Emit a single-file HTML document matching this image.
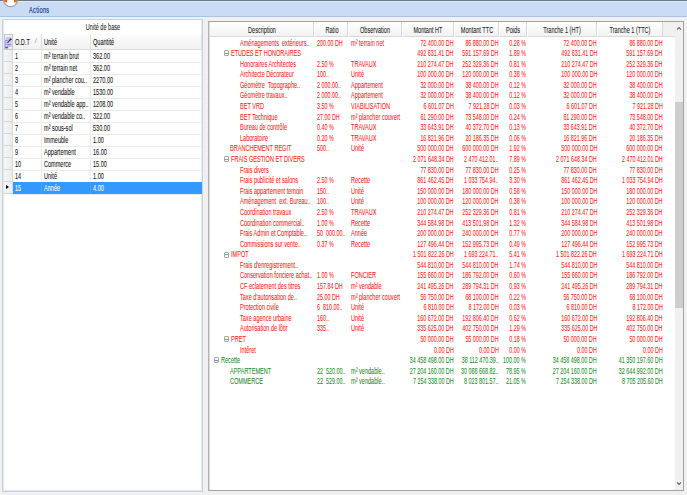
<!DOCTYPE html>
<html><head><meta charset="utf-8"><title>Unité de base</title>
<style>
html,body{margin:0;padding:0}
body{width:687px;height:495px;overflow:hidden;position:relative;background:#f0f0f0;font-family:"Liberation Sans",sans-serif}
.b{position:absolute}
.t{position:absolute;z-index:3;white-space:pre;-webkit-text-stroke:0.07px currentColor;line-height:10px;font-size:8.7px}
.c{text-align:center}
</style></head><body>
<div class="b" style="left:0px;top:0px;width:687px;height:1px;background:#6d7b89"></div>
<div class="b" style="left:0px;top:1px;width:687px;height:15px;background:#c9dcf4"></div>
<div class="b" style="left:0px;top:1px;width:687px;height:1px;background:#d9e7f8"></div>
<div class="b" style="left:0px;top:16px;width:687px;height:1px;background:#a9c3e6"></div>
<svg class="b" style="left:0;top:0" width="24" height="10" viewBox="0 0 24 10"><circle cx="10.6" cy="-0.4" r="7.0" fill="#fff" stroke="#9aa0a8" stroke-width="1.1"/><path d="M3.6 -1 L7.5 -1 L7.1 2.6 L4.8 2.2 Z" fill="#e8640c"/><path d="M13.7 -1 L17.6 -1 L16.4 2.2 L14.1 2.6 Z" fill="#e8640c"/></svg>
<div class="t" style="left:28.80px;top:4.70px;color:#15398a;transform:scaleX(0.64);transform-origin:0 0;font-size:8.7px;letter-spacing:0.5px;-webkit-text-stroke:0.2px #15398a">Actions</div>
<div class="b" style="left:2px;top:19px;width:201px;height:473px;background:#fff;border:1px solid #c3d3e3;box-sizing:border-box;box-shadow:inset 1px -1px 0 #e0e9f2, inset -1px 0 0 #e0e9f2"></div>
<div class="t c" style="left:-97.00px;width:400px;top:22.00px;color:#222;transform:scaleX(0.64);transform-origin:50% 0;font-size:8.7px;">Unité de base</div>
<div class="b" style="left:4px;top:34px;width:198px;height:16px;background:linear-gradient(#fdfdfd,#f1f1f1);border-bottom:1px solid #d9d9d9;box-sizing:border-box"></div>
<div class="b" style="left:4px;top:34px;width:9px;height:16px;background:#f0f0f0;border:1px solid #c6c6c6;box-sizing:border-box"></div>
<svg class="b" style="left:4px;top:34px" width="9" height="16" viewBox="0 0 9 16"><rect x="1.8" y="3" width="5.6" height="10" fill="#cac6ee"/><rect x="1.2" y="6" width="2.6" height="8.2" fill="#8e88d6"/><rect x="1.8" y="7" width="1.6" height="1.1" fill="#fff"/><rect x="1.8" y="9.3" width="1.6" height="1.1" fill="#fff"/><rect x="1.8" y="11.4" width="1.6" height="1.1" fill="#fff"/><path d="M3.6 8.6 L7 5" stroke="#3c3890" stroke-width="1.1"/><ellipse cx="6.6" cy="5.4" rx="1.1" ry="0.8" fill="#252070"/><rect x="4" y="10.3" width="3.4" height="0.9" fill="#7b76c8"/><rect x="1.2" y="13" width="3" height="1.3" fill="#5a54b0"/></svg>
<div class="b" style="left:41px;top:34px;width:1px;height:16px;background:#dedede"></div>
<div class="b" style="left:90px;top:34px;width:1px;height:16px;background:#dedede"></div>
<div class="b" style="left:201px;top:34px;width:1px;height:16px;background:#dedede"></div>
<div class="t" style="left:14.70px;top:36.70px;color:#111;transform:scaleX(0.64);transform-origin:0 0;font-size:8.7px;">O.D.T</div>
<div class="t" style="left:35.30px;top:36.30px;color:#9a9a9a;transform:scaleX(0.9);transform-origin:0 0;font-size:7px;">/</div>
<div class="t" style="left:44.00px;top:36.70px;color:#111;transform:scaleX(0.64);transform-origin:0 0;font-size:8.7px;">Unité</div>
<div class="t" style="left:93.30px;top:36.70px;color:#111;transform:scaleX(0.64);transform-origin:0 0;font-size:8.7px;">Quantité</div>
<div class="b" style="left:4px;top:50px;width:9px;height:12px;background:linear-gradient(90deg,#f6f6f6,#ececec);border-right:1px solid #dadada;border-bottom:1px solid #d5d5d5;box-sizing:border-box"></div>
<div class="b" style="left:13px;top:62px;width:189px;height:1px;background:#ebebeb"></div>
<div class="b" style="left:41px;top:50px;width:1px;height:12px;background:#ebebeb;z-index:2"></div>
<div class="b" style="left:90px;top:50px;width:1px;height:12px;background:#ebebeb;z-index:2"></div>
<div class="b" style="left:201px;top:50px;width:1px;height:12px;background:#ebebeb"></div>
<div class="t" style="left:15.20px;top:50.70px;color:#111;transform:scaleX(0.64);transform-origin:0 0;font-size:8.7px;">1</div>
<div class="t" style="left:44.00px;top:50.70px;color:#111;transform:scaleX(0.64);transform-origin:0 0;font-size:8.7px;">m² terrain brut</div>
<div class="t" style="left:93.00px;top:50.70px;color:#111;transform:scaleX(0.64);transform-origin:0 0;font-size:8.7px;">362.00</div>
<div class="b" style="left:4px;top:62px;width:9px;height:12px;background:linear-gradient(90deg,#f6f6f6,#ececec);border-right:1px solid #dadada;border-bottom:1px solid #d5d5d5;box-sizing:border-box"></div>
<div class="b" style="left:13px;top:74px;width:189px;height:1px;background:#ebebeb"></div>
<div class="b" style="left:41px;top:62px;width:1px;height:12px;background:#ebebeb;z-index:2"></div>
<div class="b" style="left:90px;top:62px;width:1px;height:12px;background:#ebebeb;z-index:2"></div>
<div class="b" style="left:201px;top:62px;width:1px;height:12px;background:#ebebeb"></div>
<div class="t" style="left:15.20px;top:62.70px;color:#111;transform:scaleX(0.64);transform-origin:0 0;font-size:8.7px;">2</div>
<div class="t" style="left:44.00px;top:62.70px;color:#111;transform:scaleX(0.64);transform-origin:0 0;font-size:8.7px;">m² terrain net</div>
<div class="t" style="left:93.00px;top:62.70px;color:#111;transform:scaleX(0.64);transform-origin:0 0;font-size:8.7px;">362.00</div>
<div class="b" style="left:4px;top:74px;width:9px;height:12px;background:linear-gradient(90deg,#f6f6f6,#ececec);border-right:1px solid #dadada;border-bottom:1px solid #d5d5d5;box-sizing:border-box"></div>
<div class="b" style="left:13px;top:86px;width:189px;height:1px;background:#ebebeb"></div>
<div class="b" style="left:41px;top:74px;width:1px;height:12px;background:#ebebeb;z-index:2"></div>
<div class="b" style="left:90px;top:74px;width:1px;height:12px;background:#ebebeb;z-index:2"></div>
<div class="b" style="left:201px;top:74px;width:1px;height:12px;background:#ebebeb"></div>
<div class="t" style="left:15.20px;top:74.70px;color:#111;transform:scaleX(0.64);transform-origin:0 0;font-size:8.7px;">3</div>
<div class="t" style="left:44.00px;top:74.70px;color:#111;transform:scaleX(0.64);transform-origin:0 0;font-size:8.7px;">m² plancher cou..</div>
<div class="t" style="left:93.00px;top:74.70px;color:#111;transform:scaleX(0.64);transform-origin:0 0;font-size:8.7px;">2270.00</div>
<div class="b" style="left:4px;top:86px;width:9px;height:12px;background:linear-gradient(90deg,#f6f6f6,#ececec);border-right:1px solid #dadada;border-bottom:1px solid #d5d5d5;box-sizing:border-box"></div>
<div class="b" style="left:13px;top:98px;width:189px;height:1px;background:#ebebeb"></div>
<div class="b" style="left:41px;top:86px;width:1px;height:12px;background:#ebebeb;z-index:2"></div>
<div class="b" style="left:90px;top:86px;width:1px;height:12px;background:#ebebeb;z-index:2"></div>
<div class="b" style="left:201px;top:86px;width:1px;height:12px;background:#ebebeb"></div>
<div class="t" style="left:15.20px;top:86.70px;color:#111;transform:scaleX(0.64);transform-origin:0 0;font-size:8.7px;">4</div>
<div class="t" style="left:44.00px;top:86.70px;color:#111;transform:scaleX(0.64);transform-origin:0 0;font-size:8.7px;">m² vendable</div>
<div class="t" style="left:93.00px;top:86.70px;color:#111;transform:scaleX(0.64);transform-origin:0 0;font-size:8.7px;">1530.00</div>
<div class="b" style="left:4px;top:98px;width:9px;height:12px;background:linear-gradient(90deg,#f6f6f6,#ececec);border-right:1px solid #dadada;border-bottom:1px solid #d5d5d5;box-sizing:border-box"></div>
<div class="b" style="left:13px;top:110px;width:189px;height:1px;background:#ebebeb"></div>
<div class="b" style="left:41px;top:98px;width:1px;height:12px;background:#ebebeb;z-index:2"></div>
<div class="b" style="left:90px;top:98px;width:1px;height:12px;background:#ebebeb;z-index:2"></div>
<div class="b" style="left:201px;top:98px;width:1px;height:12px;background:#ebebeb"></div>
<div class="t" style="left:15.20px;top:98.70px;color:#111;transform:scaleX(0.64);transform-origin:0 0;font-size:8.7px;">5</div>
<div class="t" style="left:44.00px;top:98.70px;color:#111;transform:scaleX(0.64);transform-origin:0 0;font-size:8.7px;">m² vendable app..</div>
<div class="t" style="left:93.00px;top:98.70px;color:#111;transform:scaleX(0.64);transform-origin:0 0;font-size:8.7px;">1208.00</div>
<div class="b" style="left:4px;top:110px;width:9px;height:12px;background:linear-gradient(90deg,#f6f6f6,#ececec);border-right:1px solid #dadada;border-bottom:1px solid #d5d5d5;box-sizing:border-box"></div>
<div class="b" style="left:13px;top:122px;width:189px;height:1px;background:#ebebeb"></div>
<div class="b" style="left:41px;top:110px;width:1px;height:12px;background:#ebebeb;z-index:2"></div>
<div class="b" style="left:90px;top:110px;width:1px;height:12px;background:#ebebeb;z-index:2"></div>
<div class="b" style="left:201px;top:110px;width:1px;height:12px;background:#ebebeb"></div>
<div class="t" style="left:15.20px;top:110.70px;color:#111;transform:scaleX(0.64);transform-origin:0 0;font-size:8.7px;">6</div>
<div class="t" style="left:44.00px;top:110.70px;color:#111;transform:scaleX(0.64);transform-origin:0 0;font-size:8.7px;">m² vendable co..</div>
<div class="t" style="left:93.00px;top:110.70px;color:#111;transform:scaleX(0.64);transform-origin:0 0;font-size:8.7px;">322.00</div>
<div class="b" style="left:4px;top:122px;width:9px;height:12px;background:linear-gradient(90deg,#f6f6f6,#ececec);border-right:1px solid #dadada;border-bottom:1px solid #d5d5d5;box-sizing:border-box"></div>
<div class="b" style="left:13px;top:134px;width:189px;height:1px;background:#ebebeb"></div>
<div class="b" style="left:41px;top:122px;width:1px;height:12px;background:#ebebeb;z-index:2"></div>
<div class="b" style="left:90px;top:122px;width:1px;height:12px;background:#ebebeb;z-index:2"></div>
<div class="b" style="left:201px;top:122px;width:1px;height:12px;background:#ebebeb"></div>
<div class="t" style="left:15.20px;top:122.70px;color:#111;transform:scaleX(0.64);transform-origin:0 0;font-size:8.7px;">7</div>
<div class="t" style="left:44.00px;top:122.70px;color:#111;transform:scaleX(0.64);transform-origin:0 0;font-size:8.7px;">m² sous-sol</div>
<div class="t" style="left:93.00px;top:122.70px;color:#111;transform:scaleX(0.64);transform-origin:0 0;font-size:8.7px;">530.00</div>
<div class="b" style="left:4px;top:134px;width:9px;height:12px;background:linear-gradient(90deg,#f6f6f6,#ececec);border-right:1px solid #dadada;border-bottom:1px solid #d5d5d5;box-sizing:border-box"></div>
<div class="b" style="left:13px;top:146px;width:189px;height:1px;background:#ebebeb"></div>
<div class="b" style="left:41px;top:134px;width:1px;height:12px;background:#ebebeb;z-index:2"></div>
<div class="b" style="left:90px;top:134px;width:1px;height:12px;background:#ebebeb;z-index:2"></div>
<div class="b" style="left:201px;top:134px;width:1px;height:12px;background:#ebebeb"></div>
<div class="t" style="left:15.20px;top:134.70px;color:#111;transform:scaleX(0.64);transform-origin:0 0;font-size:8.7px;">8</div>
<div class="t" style="left:44.00px;top:134.70px;color:#111;transform:scaleX(0.64);transform-origin:0 0;font-size:8.7px;">Immeuble</div>
<div class="t" style="left:93.00px;top:134.70px;color:#111;transform:scaleX(0.64);transform-origin:0 0;font-size:8.7px;">1.00</div>
<div class="b" style="left:4px;top:146px;width:9px;height:12px;background:linear-gradient(90deg,#f6f6f6,#ececec);border-right:1px solid #dadada;border-bottom:1px solid #d5d5d5;box-sizing:border-box"></div>
<div class="b" style="left:13px;top:158px;width:189px;height:1px;background:#ebebeb"></div>
<div class="b" style="left:41px;top:146px;width:1px;height:12px;background:#ebebeb;z-index:2"></div>
<div class="b" style="left:90px;top:146px;width:1px;height:12px;background:#ebebeb;z-index:2"></div>
<div class="b" style="left:201px;top:146px;width:1px;height:12px;background:#ebebeb"></div>
<div class="t" style="left:15.20px;top:146.70px;color:#111;transform:scaleX(0.64);transform-origin:0 0;font-size:8.7px;">9</div>
<div class="t" style="left:44.00px;top:146.70px;color:#111;transform:scaleX(0.64);transform-origin:0 0;font-size:8.7px;">Appartement</div>
<div class="t" style="left:93.00px;top:146.70px;color:#111;transform:scaleX(0.64);transform-origin:0 0;font-size:8.7px;">16.00</div>
<div class="b" style="left:4px;top:158px;width:9px;height:12px;background:linear-gradient(90deg,#f6f6f6,#ececec);border-right:1px solid #dadada;border-bottom:1px solid #d5d5d5;box-sizing:border-box"></div>
<div class="b" style="left:13px;top:170px;width:189px;height:1px;background:#ebebeb"></div>
<div class="b" style="left:41px;top:158px;width:1px;height:12px;background:#ebebeb;z-index:2"></div>
<div class="b" style="left:90px;top:158px;width:1px;height:12px;background:#ebebeb;z-index:2"></div>
<div class="b" style="left:201px;top:158px;width:1px;height:12px;background:#ebebeb"></div>
<div class="t" style="left:15.20px;top:158.70px;color:#111;transform:scaleX(0.64);transform-origin:0 0;font-size:8.7px;">10</div>
<div class="t" style="left:44.00px;top:158.70px;color:#111;transform:scaleX(0.64);transform-origin:0 0;font-size:8.7px;">Commerce</div>
<div class="t" style="left:93.00px;top:158.70px;color:#111;transform:scaleX(0.64);transform-origin:0 0;font-size:8.7px;">15.00</div>
<div class="b" style="left:4px;top:170px;width:9px;height:12px;background:linear-gradient(90deg,#f6f6f6,#ececec);border-right:1px solid #dadada;border-bottom:1px solid #d5d5d5;box-sizing:border-box"></div>
<div class="b" style="left:13px;top:182px;width:189px;height:1px;background:#ebebeb"></div>
<div class="b" style="left:41px;top:170px;width:1px;height:12px;background:#ebebeb;z-index:2"></div>
<div class="b" style="left:90px;top:170px;width:1px;height:12px;background:#ebebeb;z-index:2"></div>
<div class="b" style="left:201px;top:170px;width:1px;height:12px;background:#ebebeb"></div>
<div class="t" style="left:15.20px;top:170.70px;color:#111;transform:scaleX(0.64);transform-origin:0 0;font-size:8.7px;">14</div>
<div class="t" style="left:44.00px;top:170.70px;color:#111;transform:scaleX(0.64);transform-origin:0 0;font-size:8.7px;">Unité</div>
<div class="t" style="left:93.00px;top:170.70px;color:#111;transform:scaleX(0.64);transform-origin:0 0;font-size:8.7px;">1.00</div>
<div class="b" style="left:4px;top:182px;width:9px;height:12px;background:linear-gradient(90deg,#f6f6f6,#ececec);border-right:1px solid #dadada;border-bottom:1px solid #d5d5d5;box-sizing:border-box"></div>
<div class="b" style="left:13px;top:182px;width:189px;height:12px;background:#3399ff;z-index:1"></div>
<div class="b" style="left:6.3px;top:185.2px;width:0;height:0;border-left:3.6px solid #000;border-top:2.9px solid transparent;border-bottom:2.9px solid transparent"></div>
<div class="b" style="left:13px;top:194px;width:189px;height:1px;background:#ebebeb"></div>
<div class="b" style="left:41px;top:182px;width:1px;height:12px;background:#4da3ff;z-index:2"></div>
<div class="b" style="left:90px;top:182px;width:1px;height:12px;background:#4da3ff;z-index:2"></div>
<div class="b" style="left:201px;top:182px;width:1px;height:12px;background:#ebebeb"></div>
<div class="t" style="left:15.20px;top:182.70px;color:#fff;transform:scaleX(0.64);transform-origin:0 0;font-size:8.7px;">15</div>
<div class="t" style="left:44.00px;top:182.70px;color:#fff;transform:scaleX(0.64);transform-origin:0 0;font-size:8.7px;">Année</div>
<div class="t" style="left:93.00px;top:182.70px;color:#fff;transform:scaleX(0.64);transform-origin:0 0;font-size:8.7px;">4.00</div>
<div class="b" style="left:208px;top:21px;width:476px;height:470px;background:#fff;border:1px solid #a3a3a3;border-left:1px solid #b3b3b3;box-sizing:border-box;box-shadow:inset 1px 0 0 #dcdcdc"></div>
<div class="b" style="left:210px;top:22px;width:465px;height:15px;background:linear-gradient(#ffffff,#f2f2f2);border-bottom:1px solid #d9d9d9;box-sizing:border-box"></div>
<div class="b" style="left:313px;top:22px;width:1px;height:15px;background:#d6d9dc"></div>
<div class="b" style="left:314px;top:22px;width:1px;height:15px;background:#ffffff"></div>
<div class="t c" style="left:62.00px;width:400px;top:25.00px;color:#1a1a1a;transform:scaleX(0.64);transform-origin:50% 0;font-size:8.7px;">Description</div>
<div class="b" style="left:347px;top:22px;width:1px;height:15px;background:#d6d9dc"></div>
<div class="b" style="left:348px;top:22px;width:1px;height:15px;background:#ffffff"></div>
<div class="t c" style="left:131.80px;width:400px;top:25.00px;color:#1a1a1a;transform:scaleX(0.64);transform-origin:50% 0;font-size:8.7px;">Ratio</div>
<div class="b" style="left:401px;top:22px;width:1px;height:15px;background:#d6d9dc"></div>
<div class="b" style="left:402px;top:22px;width:1px;height:15px;background:#ffffff"></div>
<div class="t c" style="left:174.75px;width:400px;top:25.00px;color:#1a1a1a;transform:scaleX(0.64);transform-origin:50% 0;font-size:8.7px;">Observation</div>
<div class="b" style="left:453px;top:22px;width:1px;height:15px;background:#d6d9dc"></div>
<div class="b" style="left:454px;top:22px;width:1px;height:15px;background:#ffffff"></div>
<div class="t c" style="left:227.75px;width:400px;top:25.00px;color:#1a1a1a;transform:scaleX(0.64);transform-origin:50% 0;font-size:8.7px;">Montant HT</div>
<div class="b" style="left:498px;top:22px;width:1px;height:15px;background:#d6d9dc"></div>
<div class="b" style="left:499px;top:22px;width:1px;height:15px;background:#ffffff"></div>
<div class="t c" style="left:276.50px;width:400px;top:25.00px;color:#1a1a1a;transform:scaleX(0.64);transform-origin:50% 0;font-size:8.7px;">Montant TTC</div>
<div class="b" style="left:526px;top:22px;width:1px;height:15px;background:#d6d9dc"></div>
<div class="b" style="left:527px;top:22px;width:1px;height:15px;background:#ffffff"></div>
<div class="t c" style="left:312.85px;width:400px;top:25.00px;color:#1a1a1a;transform:scaleX(0.64);transform-origin:50% 0;font-size:8.7px;">Poids</div>
<div class="b" style="left:596px;top:22px;width:1px;height:15px;background:#d6d9dc"></div>
<div class="b" style="left:597px;top:22px;width:1px;height:15px;background:#ffffff"></div>
<div class="t c" style="left:362.05px;width:400px;top:25.00px;color:#1a1a1a;transform:scaleX(0.64);transform-origin:50% 0;font-size:8.7px;">Tranche 1 (HT)</div>
<div class="b" style="left:662px;top:22px;width:1px;height:15px;background:#d6d9dc"></div>
<div class="b" style="left:663px;top:22px;width:1px;height:15px;background:#ffffff"></div>
<div class="t c" style="left:430.20px;width:400px;top:25.00px;color:#1a1a1a;transform:scaleX(0.64);transform-origin:50% 0;font-size:8.7px;">Tranche 1 (TTC)</div>
<div class="b" style="left:663px;top:22px;width:12px;height:15px;background:#f0f0f0;border-bottom:1px solid #dcdcdc;box-sizing:border-box"></div>
<div class="b" style="left:675px;top:22px;width:8px;height:468px;background:#f0f0f0"></div>
<div class="b" style="left:675px;top:102px;width:8px;height:206px;background:#cdcdcd"></div>
<svg class="b" style="left:675px;top:25px" width="8" height="7" viewBox="0 0 8 7"><path d="M2 4.6 L4 2.6 L6 4.6" fill="none" stroke="#606060" stroke-width="1.1"/></svg>
<svg class="b" style="left:675px;top:480px" width="8" height="7" viewBox="0 0 8 7"><path d="M2 2.4 L4 4.4 L6 2.4" fill="none" stroke="#606060" stroke-width="1.1"/></svg>
<div class="t" style="left:239.70px;top:37.50px;color:#ff1a1a;transform:scaleX(0.64);transform-origin:0 0;font-size:8.7px;">Aménagements  extérieurs..</div>
<div class="t" style="left:316.90px;top:37.50px;color:#ff1a1a;transform:scaleX(0.62);transform-origin:0 0;font-size:8.7px;">200.00 DH</div>
<div class="t" style="left:350.50px;top:37.50px;color:#ff1a1a;transform:scaleX(0.64);transform-origin:0 0;font-size:8.7px;">m² terrain net</div>
<div class="t r" style="right:233.30px;top:37.50px;color:#ff1a1a;transform:scaleX(0.62);transform-origin:100% 0;font-size:8.7px;">72 400.00 DH</div>
<div class="t r" style="right:188.40px;top:37.50px;color:#ff1a1a;transform:scaleX(0.62);transform-origin:100% 0;font-size:8.7px;">86 880.00 DH</div>
<div class="t r" style="right:161.10px;top:37.50px;color:#ff1a1a;transform:scaleX(0.62);transform-origin:100% 0;font-size:8.7px;">0.28 %</div>
<div class="t r" style="right:90.00px;top:37.50px;color:#ff1a1a;transform:scaleX(0.62);transform-origin:100% 0;font-size:8.7px;">72 400.00 DH</div>
<div class="t r" style="right:24.60px;top:37.50px;color:#ff1a1a;transform:scaleX(0.62);transform-origin:100% 0;font-size:8.7px;">86 880.00 DH</div>
<div class="b" style="left:223.5px;top:50.3px;width:5px;height:6px;border:1px solid #a8a8a8;background:#f8f8f8;box-sizing:border-box;border-radius:1px"></div>
<div class="b" style="left:224.5px;top:52.9px;width:3px;height:1px;background:#7a94d8"></div>
<div class="t" style="left:230.60px;top:48.09px;color:#ff1a1a;transform:scaleX(0.64);transform-origin:0 0;font-size:8.7px;">ETUDES ET HONORAIRES</div>
<div class="t r" style="right:233.30px;top:48.09px;color:#ff1a1a;transform:scaleX(0.62);transform-origin:100% 0;font-size:8.7px;">492 631.41 DH</div>
<div class="t r" style="right:188.40px;top:48.09px;color:#ff1a1a;transform:scaleX(0.62);transform-origin:100% 0;font-size:8.7px;">591 157.69 DH</div>
<div class="t r" style="right:161.10px;top:48.09px;color:#ff1a1a;transform:scaleX(0.62);transform-origin:100% 0;font-size:8.7px;">1.89 %</div>
<div class="t r" style="right:90.00px;top:48.09px;color:#ff1a1a;transform:scaleX(0.62);transform-origin:100% 0;font-size:8.7px;">492 631.41 DH</div>
<div class="t r" style="right:24.60px;top:48.09px;color:#ff1a1a;transform:scaleX(0.62);transform-origin:100% 0;font-size:8.7px;">591 157.69 DH</div>
<div class="t" style="left:239.70px;top:58.68px;color:#ff1a1a;transform:scaleX(0.64);transform-origin:0 0;font-size:8.7px;">Honoraires Architectes</div>
<div class="t" style="left:316.90px;top:58.68px;color:#ff1a1a;transform:scaleX(0.62);transform-origin:0 0;font-size:8.7px;">2.50 %</div>
<div class="t" style="left:350.50px;top:58.68px;color:#ff1a1a;transform:scaleX(0.64);transform-origin:0 0;font-size:8.7px;">TRAVAUX</div>
<div class="t r" style="right:233.30px;top:58.68px;color:#ff1a1a;transform:scaleX(0.62);transform-origin:100% 0;font-size:8.7px;">210 274.47 DH</div>
<div class="t r" style="right:188.40px;top:58.68px;color:#ff1a1a;transform:scaleX(0.62);transform-origin:100% 0;font-size:8.7px;">252 329.36 DH</div>
<div class="t r" style="right:161.10px;top:58.68px;color:#ff1a1a;transform:scaleX(0.62);transform-origin:100% 0;font-size:8.7px;">0.81 %</div>
<div class="t r" style="right:90.00px;top:58.68px;color:#ff1a1a;transform:scaleX(0.62);transform-origin:100% 0;font-size:8.7px;">210 274.47 DH</div>
<div class="t r" style="right:24.60px;top:58.68px;color:#ff1a1a;transform:scaleX(0.62);transform-origin:100% 0;font-size:8.7px;">252 329.36 DH</div>
<div class="t" style="left:239.70px;top:69.27px;color:#ff1a1a;transform:scaleX(0.64);transform-origin:0 0;font-size:8.7px;">Architecte Décorateur</div>
<div class="t" style="left:316.90px;top:69.27px;color:#ff1a1a;transform:scaleX(0.62);transform-origin:0 0;font-size:8.7px;">100..</div>
<div class="t" style="left:350.50px;top:69.27px;color:#ff1a1a;transform:scaleX(0.64);transform-origin:0 0;font-size:8.7px;">Unité</div>
<div class="t r" style="right:233.30px;top:69.27px;color:#ff1a1a;transform:scaleX(0.62);transform-origin:100% 0;font-size:8.7px;">100 000.00 DH</div>
<div class="t r" style="right:188.40px;top:69.27px;color:#ff1a1a;transform:scaleX(0.62);transform-origin:100% 0;font-size:8.7px;">120 000.00 DH</div>
<div class="t r" style="right:161.10px;top:69.27px;color:#ff1a1a;transform:scaleX(0.62);transform-origin:100% 0;font-size:8.7px;">0.38 %</div>
<div class="t r" style="right:90.00px;top:69.27px;color:#ff1a1a;transform:scaleX(0.62);transform-origin:100% 0;font-size:8.7px;">100 000.00 DH</div>
<div class="t r" style="right:24.60px;top:69.27px;color:#ff1a1a;transform:scaleX(0.62);transform-origin:100% 0;font-size:8.7px;">120 000.00 DH</div>
<div class="t" style="left:239.70px;top:79.86px;color:#ff1a1a;transform:scaleX(0.64);transform-origin:0 0;font-size:8.7px;">Géomètre  Topographe..</div>
<div class="t" style="left:316.90px;top:79.86px;color:#ff1a1a;transform:scaleX(0.62);transform-origin:0 0;font-size:8.7px;">2 000.00..</div>
<div class="t" style="left:350.50px;top:79.86px;color:#ff1a1a;transform:scaleX(0.64);transform-origin:0 0;font-size:8.7px;">Appartement</div>
<div class="t r" style="right:233.30px;top:79.86px;color:#ff1a1a;transform:scaleX(0.62);transform-origin:100% 0;font-size:8.7px;">32 000.00 DH</div>
<div class="t r" style="right:188.40px;top:79.86px;color:#ff1a1a;transform:scaleX(0.62);transform-origin:100% 0;font-size:8.7px;">38 400.00 DH</div>
<div class="t r" style="right:161.10px;top:79.86px;color:#ff1a1a;transform:scaleX(0.62);transform-origin:100% 0;font-size:8.7px;">0.12 %</div>
<div class="t r" style="right:90.00px;top:79.86px;color:#ff1a1a;transform:scaleX(0.62);transform-origin:100% 0;font-size:8.7px;">32 000.00 DH</div>
<div class="t r" style="right:24.60px;top:79.86px;color:#ff1a1a;transform:scaleX(0.62);transform-origin:100% 0;font-size:8.7px;">38 400.00 DH</div>
<div class="t" style="left:239.70px;top:90.45px;color:#ff1a1a;transform:scaleX(0.64);transform-origin:0 0;font-size:8.7px;">Géomètre travaux..</div>
<div class="t" style="left:316.90px;top:90.45px;color:#ff1a1a;transform:scaleX(0.62);transform-origin:0 0;font-size:8.7px;">2 000.00..</div>
<div class="t" style="left:350.50px;top:90.45px;color:#ff1a1a;transform:scaleX(0.64);transform-origin:0 0;font-size:8.7px;">Appartement</div>
<div class="t r" style="right:233.30px;top:90.45px;color:#ff1a1a;transform:scaleX(0.62);transform-origin:100% 0;font-size:8.7px;">32 000.00 DH</div>
<div class="t r" style="right:188.40px;top:90.45px;color:#ff1a1a;transform:scaleX(0.62);transform-origin:100% 0;font-size:8.7px;">38 400.00 DH</div>
<div class="t r" style="right:161.10px;top:90.45px;color:#ff1a1a;transform:scaleX(0.62);transform-origin:100% 0;font-size:8.7px;">0.12 %</div>
<div class="t r" style="right:90.00px;top:90.45px;color:#ff1a1a;transform:scaleX(0.62);transform-origin:100% 0;font-size:8.7px;">32 000.00 DH</div>
<div class="t r" style="right:24.60px;top:90.45px;color:#ff1a1a;transform:scaleX(0.62);transform-origin:100% 0;font-size:8.7px;">38 400.00 DH</div>
<div class="t" style="left:239.70px;top:101.04px;color:#ff1a1a;transform:scaleX(0.64);transform-origin:0 0;font-size:8.7px;">BET VRD</div>
<div class="t" style="left:316.90px;top:101.04px;color:#ff1a1a;transform:scaleX(0.62);transform-origin:0 0;font-size:8.7px;">3.50 %</div>
<div class="t" style="left:350.50px;top:101.04px;color:#ff1a1a;transform:scaleX(0.64);transform-origin:0 0;font-size:8.7px;">VIABILISATION</div>
<div class="t r" style="right:233.30px;top:101.04px;color:#ff1a1a;transform:scaleX(0.62);transform-origin:100% 0;font-size:8.7px;">6 601.07 DH</div>
<div class="t r" style="right:188.40px;top:101.04px;color:#ff1a1a;transform:scaleX(0.62);transform-origin:100% 0;font-size:8.7px;">7 921.28 DH</div>
<div class="t r" style="right:161.10px;top:101.04px;color:#ff1a1a;transform:scaleX(0.62);transform-origin:100% 0;font-size:8.7px;">0.03 %</div>
<div class="t r" style="right:90.00px;top:101.04px;color:#ff1a1a;transform:scaleX(0.62);transform-origin:100% 0;font-size:8.7px;">6 601.07 DH</div>
<div class="t r" style="right:24.60px;top:101.04px;color:#ff1a1a;transform:scaleX(0.62);transform-origin:100% 0;font-size:8.7px;">7 921.28 DH</div>
<div class="t" style="left:239.70px;top:111.63px;color:#ff1a1a;transform:scaleX(0.64);transform-origin:0 0;font-size:8.7px;">BET Technique</div>
<div class="t" style="left:316.90px;top:111.63px;color:#ff1a1a;transform:scaleX(0.62);transform-origin:0 0;font-size:8.7px;">27.00 DH</div>
<div class="t" style="left:350.50px;top:111.63px;color:#ff1a1a;transform:scaleX(0.64);transform-origin:0 0;font-size:8.7px;">m² plancher couvert</div>
<div class="t r" style="right:233.30px;top:111.63px;color:#ff1a1a;transform:scaleX(0.62);transform-origin:100% 0;font-size:8.7px;">61 290.00 DH</div>
<div class="t r" style="right:188.40px;top:111.63px;color:#ff1a1a;transform:scaleX(0.62);transform-origin:100% 0;font-size:8.7px;">73 548.00 DH</div>
<div class="t r" style="right:161.10px;top:111.63px;color:#ff1a1a;transform:scaleX(0.62);transform-origin:100% 0;font-size:8.7px;">0.24 %</div>
<div class="t r" style="right:90.00px;top:111.63px;color:#ff1a1a;transform:scaleX(0.62);transform-origin:100% 0;font-size:8.7px;">61 290.00 DH</div>
<div class="t r" style="right:24.60px;top:111.63px;color:#ff1a1a;transform:scaleX(0.62);transform-origin:100% 0;font-size:8.7px;">73 548.00 DH</div>
<div class="t" style="left:239.70px;top:122.22px;color:#ff1a1a;transform:scaleX(0.64);transform-origin:0 0;font-size:8.7px;">Bureau de contrôle</div>
<div class="t" style="left:316.90px;top:122.22px;color:#ff1a1a;transform:scaleX(0.62);transform-origin:0 0;font-size:8.7px;">0.40 %</div>
<div class="t" style="left:350.50px;top:122.22px;color:#ff1a1a;transform:scaleX(0.64);transform-origin:0 0;font-size:8.7px;">TRAVAUX</div>
<div class="t r" style="right:233.30px;top:122.22px;color:#ff1a1a;transform:scaleX(0.62);transform-origin:100% 0;font-size:8.7px;">33 643.91 DH</div>
<div class="t r" style="right:188.40px;top:122.22px;color:#ff1a1a;transform:scaleX(0.62);transform-origin:100% 0;font-size:8.7px;">40 372.70 DH</div>
<div class="t r" style="right:161.10px;top:122.22px;color:#ff1a1a;transform:scaleX(0.62);transform-origin:100% 0;font-size:8.7px;">0.13 %</div>
<div class="t r" style="right:90.00px;top:122.22px;color:#ff1a1a;transform:scaleX(0.62);transform-origin:100% 0;font-size:8.7px;">33 643.91 DH</div>
<div class="t r" style="right:24.60px;top:122.22px;color:#ff1a1a;transform:scaleX(0.62);transform-origin:100% 0;font-size:8.7px;">40 372.70 DH</div>
<div class="t" style="left:239.70px;top:132.81px;color:#ff1a1a;transform:scaleX(0.64);transform-origin:0 0;font-size:8.7px;">Laboratoire</div>
<div class="t" style="left:316.90px;top:132.81px;color:#ff1a1a;transform:scaleX(0.62);transform-origin:0 0;font-size:8.7px;">0.20 %</div>
<div class="t" style="left:350.50px;top:132.81px;color:#ff1a1a;transform:scaleX(0.64);transform-origin:0 0;font-size:8.7px;">TRAVAUX</div>
<div class="t r" style="right:233.30px;top:132.81px;color:#ff1a1a;transform:scaleX(0.62);transform-origin:100% 0;font-size:8.7px;">16 821.96 DH</div>
<div class="t r" style="right:188.40px;top:132.81px;color:#ff1a1a;transform:scaleX(0.62);transform-origin:100% 0;font-size:8.7px;">20 186.35 DH</div>
<div class="t r" style="right:161.10px;top:132.81px;color:#ff1a1a;transform:scaleX(0.62);transform-origin:100% 0;font-size:8.7px;">0.06 %</div>
<div class="t r" style="right:90.00px;top:132.81px;color:#ff1a1a;transform:scaleX(0.62);transform-origin:100% 0;font-size:8.7px;">16 821.96 DH</div>
<div class="t r" style="right:24.60px;top:132.81px;color:#ff1a1a;transform:scaleX(0.62);transform-origin:100% 0;font-size:8.7px;">20 186.35 DH</div>
<div class="t" style="left:229.70px;top:143.40px;color:#ff1a1a;transform:scaleX(0.64);transform-origin:0 0;font-size:8.7px;">BRANCHEMENT REGIT</div>
<div class="t" style="left:316.90px;top:143.40px;color:#ff1a1a;transform:scaleX(0.62);transform-origin:0 0;font-size:8.7px;">500..</div>
<div class="t" style="left:350.50px;top:143.40px;color:#ff1a1a;transform:scaleX(0.64);transform-origin:0 0;font-size:8.7px;">Unité</div>
<div class="t r" style="right:233.30px;top:143.40px;color:#ff1a1a;transform:scaleX(0.62);transform-origin:100% 0;font-size:8.7px;">500 000.00 DH</div>
<div class="t r" style="right:188.40px;top:143.40px;color:#ff1a1a;transform:scaleX(0.62);transform-origin:100% 0;font-size:8.7px;">600 000.00 DH</div>
<div class="t r" style="right:161.10px;top:143.40px;color:#ff1a1a;transform:scaleX(0.62);transform-origin:100% 0;font-size:8.7px;">1.92 %</div>
<div class="t r" style="right:90.00px;top:143.40px;color:#ff1a1a;transform:scaleX(0.62);transform-origin:100% 0;font-size:8.7px;">500 000.00 DH</div>
<div class="t r" style="right:24.60px;top:143.40px;color:#ff1a1a;transform:scaleX(0.62);transform-origin:100% 0;font-size:8.7px;">600 000.00 DH</div>
<div class="b" style="left:223.5px;top:156.2px;width:5px;height:6px;border:1px solid #a8a8a8;background:#f8f8f8;box-sizing:border-box;border-radius:1px"></div>
<div class="b" style="left:224.5px;top:158.8px;width:3px;height:1px;background:#7a94d8"></div>
<div class="t" style="left:230.60px;top:153.99px;color:#ff1a1a;transform:scaleX(0.64);transform-origin:0 0;font-size:8.7px;">FRAIS GESTION ET DIVERS</div>
<div class="t r" style="right:233.30px;top:153.99px;color:#ff1a1a;transform:scaleX(0.62);transform-origin:100% 0;font-size:8.7px;">2 071 648.34 DH</div>
<div class="t r" style="right:188.40px;top:153.99px;color:#ff1a1a;transform:scaleX(0.62);transform-origin:100% 0;font-size:8.7px;">2 470 412.01..</div>
<div class="t r" style="right:161.10px;top:153.99px;color:#ff1a1a;transform:scaleX(0.62);transform-origin:100% 0;font-size:8.7px;">7.89 %</div>
<div class="t r" style="right:90.00px;top:153.99px;color:#ff1a1a;transform:scaleX(0.62);transform-origin:100% 0;font-size:8.7px;">2 071 648.34 DH</div>
<div class="t r" style="right:24.60px;top:153.99px;color:#ff1a1a;transform:scaleX(0.62);transform-origin:100% 0;font-size:8.7px;">2 470 412.01 DH</div>
<div class="t" style="left:239.70px;top:164.58px;color:#ff1a1a;transform:scaleX(0.64);transform-origin:0 0;font-size:8.7px;">Frais divers</div>
<div class="t r" style="right:233.30px;top:164.58px;color:#ff1a1a;transform:scaleX(0.62);transform-origin:100% 0;font-size:8.7px;">77 830.00 DH</div>
<div class="t r" style="right:188.40px;top:164.58px;color:#ff1a1a;transform:scaleX(0.62);transform-origin:100% 0;font-size:8.7px;">77 830.00 DH</div>
<div class="t r" style="right:161.10px;top:164.58px;color:#ff1a1a;transform:scaleX(0.62);transform-origin:100% 0;font-size:8.7px;">0.25 %</div>
<div class="t r" style="right:90.00px;top:164.58px;color:#ff1a1a;transform:scaleX(0.62);transform-origin:100% 0;font-size:8.7px;">77 830.00 DH</div>
<div class="t r" style="right:24.60px;top:164.58px;color:#ff1a1a;transform:scaleX(0.62);transform-origin:100% 0;font-size:8.7px;">77 830.00 DH</div>
<div class="t" style="left:239.70px;top:175.17px;color:#ff1a1a;transform:scaleX(0.64);transform-origin:0 0;font-size:8.7px;">Frais publicité et salons</div>
<div class="t" style="left:316.90px;top:175.17px;color:#ff1a1a;transform:scaleX(0.62);transform-origin:0 0;font-size:8.7px;">2.50 %</div>
<div class="t" style="left:350.50px;top:175.17px;color:#ff1a1a;transform:scaleX(0.64);transform-origin:0 0;font-size:8.7px;">Recette</div>
<div class="t r" style="right:233.30px;top:175.17px;color:#ff1a1a;transform:scaleX(0.62);transform-origin:100% 0;font-size:8.7px;">861 462.45 DH</div>
<div class="t r" style="right:188.40px;top:175.17px;color:#ff1a1a;transform:scaleX(0.62);transform-origin:100% 0;font-size:8.7px;">1 033 754.94..</div>
<div class="t r" style="right:161.10px;top:175.17px;color:#ff1a1a;transform:scaleX(0.62);transform-origin:100% 0;font-size:8.7px;">3.30 %</div>
<div class="t r" style="right:90.00px;top:175.17px;color:#ff1a1a;transform:scaleX(0.62);transform-origin:100% 0;font-size:8.7px;">861 462.45 DH</div>
<div class="t r" style="right:24.60px;top:175.17px;color:#ff1a1a;transform:scaleX(0.62);transform-origin:100% 0;font-size:8.7px;">1 033 754.94 DH</div>
<div class="t" style="left:239.70px;top:185.76px;color:#ff1a1a;transform:scaleX(0.64);transform-origin:0 0;font-size:8.7px;">Frais appartement temoin</div>
<div class="t" style="left:316.90px;top:185.76px;color:#ff1a1a;transform:scaleX(0.62);transform-origin:0 0;font-size:8.7px;">150..</div>
<div class="t" style="left:350.50px;top:185.76px;color:#ff1a1a;transform:scaleX(0.64);transform-origin:0 0;font-size:8.7px;">Unité</div>
<div class="t r" style="right:233.30px;top:185.76px;color:#ff1a1a;transform:scaleX(0.62);transform-origin:100% 0;font-size:8.7px;">150 000.00 DH</div>
<div class="t r" style="right:188.40px;top:185.76px;color:#ff1a1a;transform:scaleX(0.62);transform-origin:100% 0;font-size:8.7px;">180 000.00 DH</div>
<div class="t r" style="right:161.10px;top:185.76px;color:#ff1a1a;transform:scaleX(0.62);transform-origin:100% 0;font-size:8.7px;">0.58 %</div>
<div class="t r" style="right:90.00px;top:185.76px;color:#ff1a1a;transform:scaleX(0.62);transform-origin:100% 0;font-size:8.7px;">150 000.00 DH</div>
<div class="t r" style="right:24.60px;top:185.76px;color:#ff1a1a;transform:scaleX(0.62);transform-origin:100% 0;font-size:8.7px;">180 000.00 DH</div>
<div class="t" style="left:239.70px;top:196.35px;color:#ff1a1a;transform:scaleX(0.64);transform-origin:0 0;font-size:8.7px;">Aménagement  ext. Bureau..</div>
<div class="t" style="left:316.90px;top:196.35px;color:#ff1a1a;transform:scaleX(0.62);transform-origin:0 0;font-size:8.7px;">100..</div>
<div class="t" style="left:350.50px;top:196.35px;color:#ff1a1a;transform:scaleX(0.64);transform-origin:0 0;font-size:8.7px;">Unité</div>
<div class="t r" style="right:233.30px;top:196.35px;color:#ff1a1a;transform:scaleX(0.62);transform-origin:100% 0;font-size:8.7px;">100 000.00 DH</div>
<div class="t r" style="right:188.40px;top:196.35px;color:#ff1a1a;transform:scaleX(0.62);transform-origin:100% 0;font-size:8.7px;">120 000.00 DH</div>
<div class="t r" style="right:161.10px;top:196.35px;color:#ff1a1a;transform:scaleX(0.62);transform-origin:100% 0;font-size:8.7px;">0.38 %</div>
<div class="t r" style="right:90.00px;top:196.35px;color:#ff1a1a;transform:scaleX(0.62);transform-origin:100% 0;font-size:8.7px;">100 000.00 DH</div>
<div class="t r" style="right:24.60px;top:196.35px;color:#ff1a1a;transform:scaleX(0.62);transform-origin:100% 0;font-size:8.7px;">120 000.00 DH</div>
<div class="t" style="left:239.70px;top:206.94px;color:#ff1a1a;transform:scaleX(0.64);transform-origin:0 0;font-size:8.7px;">Coordination travaux</div>
<div class="t" style="left:316.90px;top:206.94px;color:#ff1a1a;transform:scaleX(0.62);transform-origin:0 0;font-size:8.7px;">2.50 %</div>
<div class="t" style="left:350.50px;top:206.94px;color:#ff1a1a;transform:scaleX(0.64);transform-origin:0 0;font-size:8.7px;">TRAVAUX</div>
<div class="t r" style="right:233.30px;top:206.94px;color:#ff1a1a;transform:scaleX(0.62);transform-origin:100% 0;font-size:8.7px;">210 274.47 DH</div>
<div class="t r" style="right:188.40px;top:206.94px;color:#ff1a1a;transform:scaleX(0.62);transform-origin:100% 0;font-size:8.7px;">252 329.36 DH</div>
<div class="t r" style="right:161.10px;top:206.94px;color:#ff1a1a;transform:scaleX(0.62);transform-origin:100% 0;font-size:8.7px;">0.81 %</div>
<div class="t r" style="right:90.00px;top:206.94px;color:#ff1a1a;transform:scaleX(0.62);transform-origin:100% 0;font-size:8.7px;">210 274.47 DH</div>
<div class="t r" style="right:24.60px;top:206.94px;color:#ff1a1a;transform:scaleX(0.62);transform-origin:100% 0;font-size:8.7px;">252 329.36 DH</div>
<div class="t" style="left:239.70px;top:217.53px;color:#ff1a1a;transform:scaleX(0.64);transform-origin:0 0;font-size:8.7px;">Coordination commercial..</div>
<div class="t" style="left:316.90px;top:217.53px;color:#ff1a1a;transform:scaleX(0.62);transform-origin:0 0;font-size:8.7px;">1.00 %</div>
<div class="t" style="left:350.50px;top:217.53px;color:#ff1a1a;transform:scaleX(0.64);transform-origin:0 0;font-size:8.7px;">Recette</div>
<div class="t r" style="right:233.30px;top:217.53px;color:#ff1a1a;transform:scaleX(0.62);transform-origin:100% 0;font-size:8.7px;">344 584.98 DH</div>
<div class="t r" style="right:188.40px;top:217.53px;color:#ff1a1a;transform:scaleX(0.62);transform-origin:100% 0;font-size:8.7px;">413 501.98 DH</div>
<div class="t r" style="right:161.10px;top:217.53px;color:#ff1a1a;transform:scaleX(0.62);transform-origin:100% 0;font-size:8.7px;">1.32 %</div>
<div class="t r" style="right:90.00px;top:217.53px;color:#ff1a1a;transform:scaleX(0.62);transform-origin:100% 0;font-size:8.7px;">344 584.98 DH</div>
<div class="t r" style="right:24.60px;top:217.53px;color:#ff1a1a;transform:scaleX(0.62);transform-origin:100% 0;font-size:8.7px;">413 501.98 DH</div>
<div class="t" style="left:239.70px;top:228.12px;color:#ff1a1a;transform:scaleX(0.64);transform-origin:0 0;font-size:8.7px;">Frais Admin et Comptable..</div>
<div class="t" style="left:316.90px;top:228.12px;color:#ff1a1a;transform:scaleX(0.62);transform-origin:0 0;font-size:8.7px;">50  000.00..</div>
<div class="t" style="left:350.50px;top:228.12px;color:#ff1a1a;transform:scaleX(0.64);transform-origin:0 0;font-size:8.7px;">Année</div>
<div class="t r" style="right:233.30px;top:228.12px;color:#ff1a1a;transform:scaleX(0.62);transform-origin:100% 0;font-size:8.7px;">200 000.00 DH</div>
<div class="t r" style="right:188.40px;top:228.12px;color:#ff1a1a;transform:scaleX(0.62);transform-origin:100% 0;font-size:8.7px;">240 000.00 DH</div>
<div class="t r" style="right:161.10px;top:228.12px;color:#ff1a1a;transform:scaleX(0.62);transform-origin:100% 0;font-size:8.7px;">0.77 %</div>
<div class="t r" style="right:90.00px;top:228.12px;color:#ff1a1a;transform:scaleX(0.62);transform-origin:100% 0;font-size:8.7px;">200 000.00 DH</div>
<div class="t r" style="right:24.60px;top:228.12px;color:#ff1a1a;transform:scaleX(0.62);transform-origin:100% 0;font-size:8.7px;">240 000.00 DH</div>
<div class="t" style="left:239.70px;top:238.71px;color:#ff1a1a;transform:scaleX(0.64);transform-origin:0 0;font-size:8.7px;">Commissions sur vente..</div>
<div class="t" style="left:316.90px;top:238.71px;color:#ff1a1a;transform:scaleX(0.62);transform-origin:0 0;font-size:8.7px;">0.37 %</div>
<div class="t" style="left:350.50px;top:238.71px;color:#ff1a1a;transform:scaleX(0.64);transform-origin:0 0;font-size:8.7px;">Recette</div>
<div class="t r" style="right:233.30px;top:238.71px;color:#ff1a1a;transform:scaleX(0.62);transform-origin:100% 0;font-size:8.7px;">127 496.44 DH</div>
<div class="t r" style="right:188.40px;top:238.71px;color:#ff1a1a;transform:scaleX(0.62);transform-origin:100% 0;font-size:8.7px;">152 995.73 DH</div>
<div class="t r" style="right:161.10px;top:238.71px;color:#ff1a1a;transform:scaleX(0.62);transform-origin:100% 0;font-size:8.7px;">0.49 %</div>
<div class="t r" style="right:90.00px;top:238.71px;color:#ff1a1a;transform:scaleX(0.62);transform-origin:100% 0;font-size:8.7px;">127 496.44 DH</div>
<div class="t r" style="right:24.60px;top:238.71px;color:#ff1a1a;transform:scaleX(0.62);transform-origin:100% 0;font-size:8.7px;">152 995.73 DH</div>
<div class="b" style="left:223.5px;top:251.5px;width:5px;height:6px;border:1px solid #a8a8a8;background:#f8f8f8;box-sizing:border-box;border-radius:1px"></div>
<div class="b" style="left:224.5px;top:254.1px;width:3px;height:1px;background:#7a94d8"></div>
<div class="t" style="left:230.60px;top:249.30px;color:#ff1a1a;transform:scaleX(0.64);transform-origin:0 0;font-size:8.7px;">IMPOT</div>
<div class="t r" style="right:233.30px;top:249.30px;color:#ff1a1a;transform:scaleX(0.62);transform-origin:100% 0;font-size:8.7px;">1 501 822.26 DH</div>
<div class="t r" style="right:188.40px;top:249.30px;color:#ff1a1a;transform:scaleX(0.62);transform-origin:100% 0;font-size:8.7px;">1 693 224.71..</div>
<div class="t r" style="right:161.10px;top:249.30px;color:#ff1a1a;transform:scaleX(0.62);transform-origin:100% 0;font-size:8.7px;">5.41 %</div>
<div class="t r" style="right:90.00px;top:249.30px;color:#ff1a1a;transform:scaleX(0.62);transform-origin:100% 0;font-size:8.7px;">1 501 822.26 DH</div>
<div class="t r" style="right:24.60px;top:249.30px;color:#ff1a1a;transform:scaleX(0.62);transform-origin:100% 0;font-size:8.7px;">1 693 224.71 DH</div>
<div class="t" style="left:239.70px;top:259.89px;color:#ff1a1a;transform:scaleX(0.64);transform-origin:0 0;font-size:8.7px;">Frais d'enregistrement..</div>
<div class="t r" style="right:233.30px;top:259.89px;color:#ff1a1a;transform:scaleX(0.62);transform-origin:100% 0;font-size:8.7px;">544 810.00 DH</div>
<div class="t r" style="right:188.40px;top:259.89px;color:#ff1a1a;transform:scaleX(0.62);transform-origin:100% 0;font-size:8.7px;">544 810.00 DH</div>
<div class="t r" style="right:161.10px;top:259.89px;color:#ff1a1a;transform:scaleX(0.62);transform-origin:100% 0;font-size:8.7px;">1.74 %</div>
<div class="t r" style="right:90.00px;top:259.89px;color:#ff1a1a;transform:scaleX(0.62);transform-origin:100% 0;font-size:8.7px;">544 810.00 DH</div>
<div class="t r" style="right:24.60px;top:259.89px;color:#ff1a1a;transform:scaleX(0.62);transform-origin:100% 0;font-size:8.7px;">544 810.00 DH</div>
<div class="t" style="left:239.70px;top:270.48px;color:#ff1a1a;transform:scaleX(0.64);transform-origin:0 0;font-size:8.7px;">Conservation fonciere achat..</div>
<div class="t" style="left:316.90px;top:270.48px;color:#ff1a1a;transform:scaleX(0.62);transform-origin:0 0;font-size:8.7px;">1.00 %</div>
<div class="t" style="left:350.50px;top:270.48px;color:#ff1a1a;transform:scaleX(0.64);transform-origin:0 0;font-size:8.7px;">FONCIER</div>
<div class="t r" style="right:233.30px;top:270.48px;color:#ff1a1a;transform:scaleX(0.62);transform-origin:100% 0;font-size:8.7px;">155 660.00 DH</div>
<div class="t r" style="right:188.40px;top:270.48px;color:#ff1a1a;transform:scaleX(0.62);transform-origin:100% 0;font-size:8.7px;">186 792.00 DH</div>
<div class="t r" style="right:161.10px;top:270.48px;color:#ff1a1a;transform:scaleX(0.62);transform-origin:100% 0;font-size:8.7px;">0.60 %</div>
<div class="t r" style="right:90.00px;top:270.48px;color:#ff1a1a;transform:scaleX(0.62);transform-origin:100% 0;font-size:8.7px;">155 660.00 DH</div>
<div class="t r" style="right:24.60px;top:270.48px;color:#ff1a1a;transform:scaleX(0.62);transform-origin:100% 0;font-size:8.7px;">186 792.00 DH</div>
<div class="t" style="left:239.70px;top:281.07px;color:#ff1a1a;transform:scaleX(0.64);transform-origin:0 0;font-size:8.7px;">CF eclatement des titres</div>
<div class="t" style="left:316.90px;top:281.07px;color:#ff1a1a;transform:scaleX(0.62);transform-origin:0 0;font-size:8.7px;">157.84 DH</div>
<div class="t" style="left:350.50px;top:281.07px;color:#ff1a1a;transform:scaleX(0.64);transform-origin:0 0;font-size:8.7px;">m² vendable</div>
<div class="t r" style="right:233.30px;top:281.07px;color:#ff1a1a;transform:scaleX(0.62);transform-origin:100% 0;font-size:8.7px;">241 495.26 DH</div>
<div class="t r" style="right:188.40px;top:281.07px;color:#ff1a1a;transform:scaleX(0.62);transform-origin:100% 0;font-size:8.7px;">289 794.31 DH</div>
<div class="t r" style="right:161.10px;top:281.07px;color:#ff1a1a;transform:scaleX(0.62);transform-origin:100% 0;font-size:8.7px;">0.93 %</div>
<div class="t r" style="right:90.00px;top:281.07px;color:#ff1a1a;transform:scaleX(0.62);transform-origin:100% 0;font-size:8.7px;">241 495.26 DH</div>
<div class="t r" style="right:24.60px;top:281.07px;color:#ff1a1a;transform:scaleX(0.62);transform-origin:100% 0;font-size:8.7px;">289 794.31 DH</div>
<div class="t" style="left:239.70px;top:291.66px;color:#ff1a1a;transform:scaleX(0.64);transform-origin:0 0;font-size:8.7px;">Taxe d'autorisation de..</div>
<div class="t" style="left:316.90px;top:291.66px;color:#ff1a1a;transform:scaleX(0.62);transform-origin:0 0;font-size:8.7px;">25.00 DH</div>
<div class="t" style="left:350.50px;top:291.66px;color:#ff1a1a;transform:scaleX(0.64);transform-origin:0 0;font-size:8.7px;">m² plancher couvert</div>
<div class="t r" style="right:233.30px;top:291.66px;color:#ff1a1a;transform:scaleX(0.62);transform-origin:100% 0;font-size:8.7px;">56 750.00 DH</div>
<div class="t r" style="right:188.40px;top:291.66px;color:#ff1a1a;transform:scaleX(0.62);transform-origin:100% 0;font-size:8.7px;">68 100.00 DH</div>
<div class="t r" style="right:161.10px;top:291.66px;color:#ff1a1a;transform:scaleX(0.62);transform-origin:100% 0;font-size:8.7px;">0.22 %</div>
<div class="t r" style="right:90.00px;top:291.66px;color:#ff1a1a;transform:scaleX(0.62);transform-origin:100% 0;font-size:8.7px;">56 750.00 DH</div>
<div class="t r" style="right:24.60px;top:291.66px;color:#ff1a1a;transform:scaleX(0.62);transform-origin:100% 0;font-size:8.7px;">68 100.00 DH</div>
<div class="t" style="left:239.70px;top:302.25px;color:#ff1a1a;transform:scaleX(0.64);transform-origin:0 0;font-size:8.7px;">Protection civile</div>
<div class="t" style="left:316.90px;top:302.25px;color:#ff1a1a;transform:scaleX(0.62);transform-origin:0 0;font-size:8.7px;">6  810.00..</div>
<div class="t" style="left:350.50px;top:302.25px;color:#ff1a1a;transform:scaleX(0.64);transform-origin:0 0;font-size:8.7px;">Unité</div>
<div class="t r" style="right:233.30px;top:302.25px;color:#ff1a1a;transform:scaleX(0.62);transform-origin:100% 0;font-size:8.7px;">6 810.00 DH</div>
<div class="t r" style="right:188.40px;top:302.25px;color:#ff1a1a;transform:scaleX(0.62);transform-origin:100% 0;font-size:8.7px;">8 172.00 DH</div>
<div class="t r" style="right:161.10px;top:302.25px;color:#ff1a1a;transform:scaleX(0.62);transform-origin:100% 0;font-size:8.7px;">0.03 %</div>
<div class="t r" style="right:90.00px;top:302.25px;color:#ff1a1a;transform:scaleX(0.62);transform-origin:100% 0;font-size:8.7px;">6 810.00 DH</div>
<div class="t r" style="right:24.60px;top:302.25px;color:#ff1a1a;transform:scaleX(0.62);transform-origin:100% 0;font-size:8.7px;">8 172.00 DH</div>
<div class="t" style="left:239.70px;top:312.84px;color:#ff1a1a;transform:scaleX(0.64);transform-origin:0 0;font-size:8.7px;">Taxe agence urbaine</div>
<div class="t" style="left:316.90px;top:312.84px;color:#ff1a1a;transform:scaleX(0.62);transform-origin:0 0;font-size:8.7px;">160..</div>
<div class="t" style="left:350.50px;top:312.84px;color:#ff1a1a;transform:scaleX(0.64);transform-origin:0 0;font-size:8.7px;">Unité</div>
<div class="t r" style="right:233.30px;top:312.84px;color:#ff1a1a;transform:scaleX(0.62);transform-origin:100% 0;font-size:8.7px;">160 672.00 DH</div>
<div class="t r" style="right:188.40px;top:312.84px;color:#ff1a1a;transform:scaleX(0.62);transform-origin:100% 0;font-size:8.7px;">192 806.40 DH</div>
<div class="t r" style="right:161.10px;top:312.84px;color:#ff1a1a;transform:scaleX(0.62);transform-origin:100% 0;font-size:8.7px;">0.62 %</div>
<div class="t r" style="right:90.00px;top:312.84px;color:#ff1a1a;transform:scaleX(0.62);transform-origin:100% 0;font-size:8.7px;">160 672.00 DH</div>
<div class="t r" style="right:24.60px;top:312.84px;color:#ff1a1a;transform:scaleX(0.62);transform-origin:100% 0;font-size:8.7px;">192 806.40 DH</div>
<div class="t" style="left:239.70px;top:323.43px;color:#ff1a1a;transform:scaleX(0.64);transform-origin:0 0;font-size:8.7px;">Autorisation de lôtir</div>
<div class="t" style="left:316.90px;top:323.43px;color:#ff1a1a;transform:scaleX(0.62);transform-origin:0 0;font-size:8.7px;">335..</div>
<div class="t" style="left:350.50px;top:323.43px;color:#ff1a1a;transform:scaleX(0.64);transform-origin:0 0;font-size:8.7px;">Unité</div>
<div class="t r" style="right:233.30px;top:323.43px;color:#ff1a1a;transform:scaleX(0.62);transform-origin:100% 0;font-size:8.7px;">335 625.00 DH</div>
<div class="t r" style="right:188.40px;top:323.43px;color:#ff1a1a;transform:scaleX(0.62);transform-origin:100% 0;font-size:8.7px;">402 750.00 DH</div>
<div class="t r" style="right:161.10px;top:323.43px;color:#ff1a1a;transform:scaleX(0.62);transform-origin:100% 0;font-size:8.7px;">1.29 %</div>
<div class="t r" style="right:90.00px;top:323.43px;color:#ff1a1a;transform:scaleX(0.62);transform-origin:100% 0;font-size:8.7px;">335 625.00 DH</div>
<div class="t r" style="right:24.60px;top:323.43px;color:#ff1a1a;transform:scaleX(0.62);transform-origin:100% 0;font-size:8.7px;">402 750.00 DH</div>
<div class="b" style="left:223.5px;top:336.2px;width:5px;height:6px;border:1px solid #a8a8a8;background:#f8f8f8;box-sizing:border-box;border-radius:1px"></div>
<div class="b" style="left:224.5px;top:338.8px;width:3px;height:1px;background:#7a94d8"></div>
<div class="t" style="left:230.60px;top:334.02px;color:#ff1a1a;transform:scaleX(0.64);transform-origin:0 0;font-size:8.7px;">PRET</div>
<div class="t r" style="right:233.30px;top:334.02px;color:#ff1a1a;transform:scaleX(0.62);transform-origin:100% 0;font-size:8.7px;">50 000.00 DH</div>
<div class="t r" style="right:188.40px;top:334.02px;color:#ff1a1a;transform:scaleX(0.62);transform-origin:100% 0;font-size:8.7px;">55 000.00 DH</div>
<div class="t r" style="right:161.10px;top:334.02px;color:#ff1a1a;transform:scaleX(0.62);transform-origin:100% 0;font-size:8.7px;">0.18 %</div>
<div class="t r" style="right:90.00px;top:334.02px;color:#ff1a1a;transform:scaleX(0.62);transform-origin:100% 0;font-size:8.7px;">50 000.00 DH</div>
<div class="t r" style="right:24.60px;top:334.02px;color:#ff1a1a;transform:scaleX(0.62);transform-origin:100% 0;font-size:8.7px;">50 000.00 DH</div>
<div class="t" style="left:239.70px;top:344.61px;color:#ff1a1a;transform:scaleX(0.64);transform-origin:0 0;font-size:8.7px;">Intêret</div>
<div class="t r" style="right:233.30px;top:344.61px;color:#ff1a1a;transform:scaleX(0.62);transform-origin:100% 0;font-size:8.7px;">0.00 DH</div>
<div class="t r" style="right:188.40px;top:344.61px;color:#ff1a1a;transform:scaleX(0.62);transform-origin:100% 0;font-size:8.7px;">0.00 DH</div>
<div class="t r" style="right:161.10px;top:344.61px;color:#ff1a1a;transform:scaleX(0.62);transform-origin:100% 0;font-size:8.7px;">0.00 %</div>
<div class="t r" style="right:90.00px;top:344.61px;color:#ff1a1a;transform:scaleX(0.62);transform-origin:100% 0;font-size:8.7px;">0.00 DH</div>
<div class="t r" style="right:24.60px;top:344.61px;color:#ff1a1a;transform:scaleX(0.62);transform-origin:100% 0;font-size:8.7px;">0.00 DH</div>
<div class="b" style="left:213.8px;top:357.4px;width:5px;height:6px;border:1px solid #a8a8a8;background:#f8f8f8;box-sizing:border-box;border-radius:1px"></div>
<div class="b" style="left:214.8px;top:360.0px;width:3px;height:1px;background:#7a94d8"></div>
<div class="t" style="left:221.20px;top:355.20px;color:#1d8a2c;transform:scaleX(0.64);transform-origin:0 0;font-size:8.7px;">Recette</div>
<div class="t r" style="right:233.30px;top:355.20px;color:#1d8a2c;transform:scaleX(0.62);transform-origin:100% 0;font-size:8.7px;">34 458 498.00 DH</div>
<div class="t r" style="right:188.40px;top:355.20px;color:#1d8a2c;transform:scaleX(0.62);transform-origin:100% 0;font-size:8.7px;">38 112 470.39..</div>
<div class="t r" style="right:161.10px;top:355.20px;color:#1d8a2c;transform:scaleX(0.62);transform-origin:100% 0;font-size:8.7px;">100.00 %</div>
<div class="t r" style="right:90.00px;top:355.20px;color:#1d8a2c;transform:scaleX(0.62);transform-origin:100% 0;font-size:8.7px;">34 458 498.00 DH</div>
<div class="t r" style="right:24.60px;top:355.20px;color:#1d8a2c;transform:scaleX(0.62);transform-origin:100% 0;font-size:8.7px;">41 350 197.60 DH</div>
<div class="t" style="left:230.30px;top:365.79px;color:#1d8a2c;transform:scaleX(0.64);transform-origin:0 0;font-size:8.7px;">APPARTEMENT</div>
<div class="t" style="left:316.90px;top:365.79px;color:#1d8a2c;transform:scaleX(0.62);transform-origin:0 0;font-size:8.7px;">22  520.00..</div>
<div class="t" style="left:350.50px;top:365.79px;color:#1d8a2c;transform:scaleX(0.64);transform-origin:0 0;font-size:8.7px;">m² vendable..</div>
<div class="t r" style="right:233.30px;top:365.79px;color:#1d8a2c;transform:scaleX(0.62);transform-origin:100% 0;font-size:8.7px;">27 204 160.00 DH</div>
<div class="t r" style="right:188.40px;top:365.79px;color:#1d8a2c;transform:scaleX(0.62);transform-origin:100% 0;font-size:8.7px;">30 088 668.82..</div>
<div class="t r" style="right:161.10px;top:365.79px;color:#1d8a2c;transform:scaleX(0.62);transform-origin:100% 0;font-size:8.7px;">78.95 %</div>
<div class="t r" style="right:90.00px;top:365.79px;color:#1d8a2c;transform:scaleX(0.62);transform-origin:100% 0;font-size:8.7px;">27 204 160.00 DH</div>
<div class="t r" style="right:24.60px;top:365.79px;color:#1d8a2c;transform:scaleX(0.62);transform-origin:100% 0;font-size:8.7px;">32 644 992.00 DH</div>
<div class="t" style="left:230.30px;top:376.38px;color:#1d8a2c;transform:scaleX(0.64);transform-origin:0 0;font-size:8.7px;">COMMERCE</div>
<div class="t" style="left:316.90px;top:376.38px;color:#1d8a2c;transform:scaleX(0.62);transform-origin:0 0;font-size:8.7px;">22  529.00..</div>
<div class="t" style="left:350.50px;top:376.38px;color:#1d8a2c;transform:scaleX(0.64);transform-origin:0 0;font-size:8.7px;">m² vendable..</div>
<div class="t r" style="right:233.30px;top:376.38px;color:#1d8a2c;transform:scaleX(0.62);transform-origin:100% 0;font-size:8.7px;">7 254 338.00 DH</div>
<div class="t r" style="right:188.40px;top:376.38px;color:#1d8a2c;transform:scaleX(0.62);transform-origin:100% 0;font-size:8.7px;">8 023 801.57..</div>
<div class="t r" style="right:161.10px;top:376.38px;color:#1d8a2c;transform:scaleX(0.62);transform-origin:100% 0;font-size:8.7px;">21.05 %</div>
<div class="t r" style="right:90.00px;top:376.38px;color:#1d8a2c;transform:scaleX(0.62);transform-origin:100% 0;font-size:8.7px;">7 254 338.00 DH</div>
<div class="t r" style="right:24.60px;top:376.38px;color:#1d8a2c;transform:scaleX(0.62);transform-origin:100% 0;font-size:8.7px;">8 705 205.60 DH</div>
</body></html>
